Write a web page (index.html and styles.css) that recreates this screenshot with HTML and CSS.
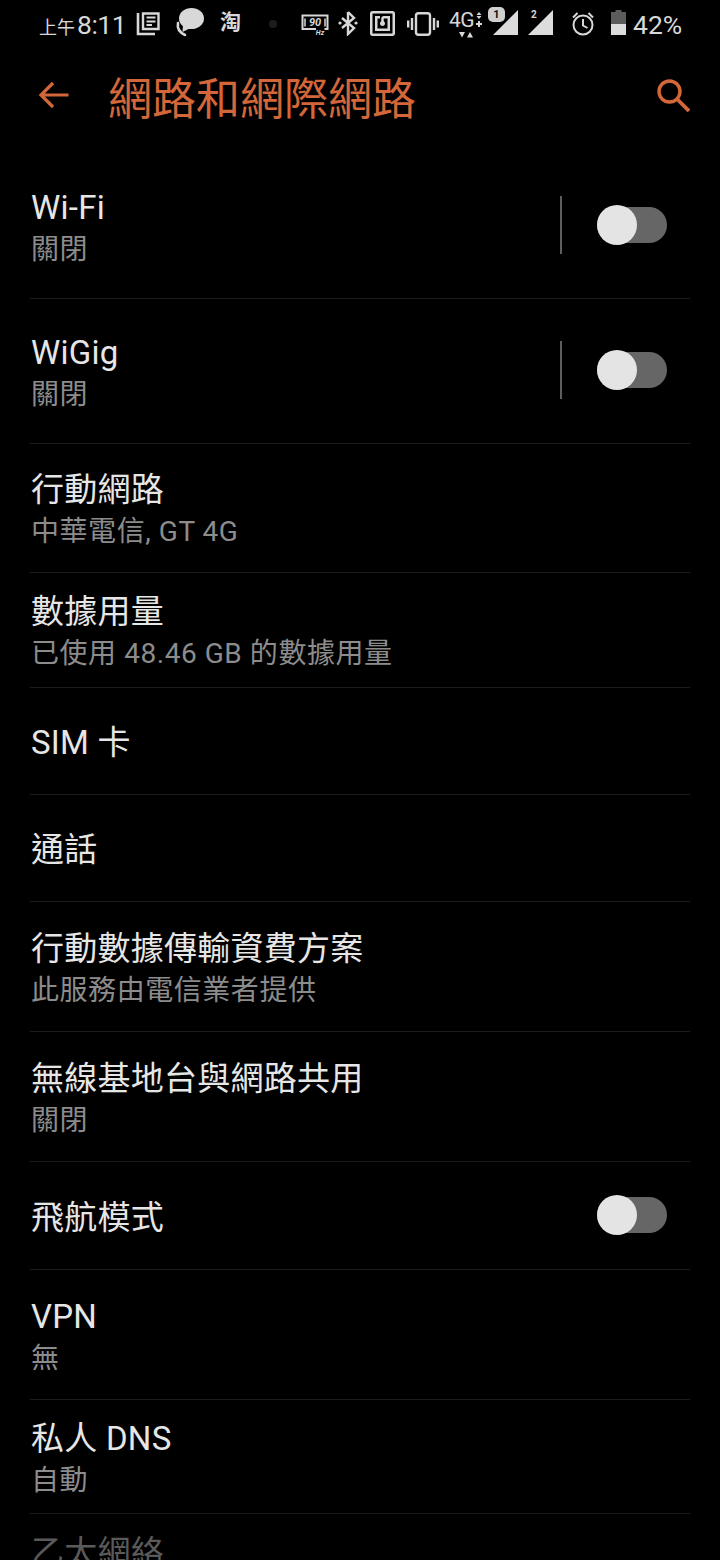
FILE: index.html
```html
<!DOCTYPE html>
<html lang="zh-Hant">
<head>
<meta charset="utf-8">
<title>網路和網際網路</title>
<link rel="stylesheet" href="styles.css">
</head>
<body>
<div class="phone">
  <header class="status">
    <span class="ampm">上午</span><span class="clock">8:11</span>
    <svg class="si news" viewBox="0 0 24 24" width="24" height="24"><path d="M2 1v21h17" fill="none" stroke="#d8d8d8" stroke-width="2.600"/><path d="M7 1.500h15.500v15.500H7z" fill="none" stroke="#d8d8d8" stroke-width="2.400"/><path d="M10.500 5.500h9M10.500 9.500h9M10.500 13h5.500" stroke="#d8d8d8" stroke-width="2"/></svg>
    <svg class="si bubble" viewBox="0 0 30 30" width="30" height="30"><ellipse cx="16.500" cy="10.500" rx="12.500" ry="10.500" fill="#d8d8d8"/><path d="M8 17l-.5 7 8-4z" fill="#d8d8d8"/><path d="M3 15Q1.500 23 10 27" fill="none" stroke="#d8d8d8" stroke-width="2.600" stroke-linecap="round"/></svg>
    <span class="taobao">淘</span>
    <span class="dot"></span>
    <svg class="si hz" viewBox="0 0 28 22" width="28" height="22"><path d="M15 15H1.500V1.500h25V15h-3" fill="none" stroke="#d8d8d8" stroke-width="2"/><path d="M4 4.500v8M24 4.500v8" stroke="#d8d8d8" stroke-width="1.500"/><text x="14" y="12" class="hz-num">90</text><text x="19" y="21" class="hz-unit">Hz</text></svg>
    <svg class="si bt" viewBox="0 0 20 26" width="20" height="26"><path d="M10 2v22l6-6L4 8M10 2l6 6L4 18" fill="none" stroke="#d8d8d8" stroke-width="2.400"/><circle cx="2" cy="13" r="1.600" fill="#d8d8d8"/><circle cx="18" cy="13" r="1.600" fill="#d8d8d8"/></svg>
    <svg class="si nfc" viewBox="2 2 20 20" width="25" height="25"><path fill="#d8d8d8" d="M20 2H4c-1.100 0-2 .9-2 2v16c0 1.100.9 2 2 2h16c1.100 0 2-.9 2-2V4c0-1.100-.9-2-2-2zm0 18H4V4h16v16zM18 6h-5c-1.100 0-2 .9-2 2v2.280c-.6.35-1 .98-1 1.720 0 1.100.9 2 2 2s2-.9 2-2c0-.74-.4-1.380-1-1.720V8h3v8H8V8h2V6H6v12h12V6z"/></svg>
    <svg class="si vib" viewBox="0 0 32 24" width="32" height="24"><rect x="9" y="1.200" width="14" height="21.600" rx="2.500" fill="none" stroke="#d8d8d8" stroke-width="2.400"/><path d="M5 6v12M1.200 8.500v7M27 6v12M30.800 8.500v7" stroke="#d8d8d8" stroke-width="2.400"/></svg>
    <span class="net">
      <span class="net-main">4G<svg viewBox="0 0 8 16" width="8" height="16"><path d="M4 0l2.500 3h-5zM4 7L1.500 4h5zM3 9h2v2h2v2H5v2H3v-2H1v-2h2z" fill="#d8d8d8"/></svg></span>
      <svg class="net-arrows" viewBox="0 0 16 6" width="16" height="6"><path d="M1 0h6L4 5.500zM9 5.500h6L12 0z" fill="#d8d8d8"/></svg>
    </span>
    <span class="sim sim1">
      <svg viewBox="0 0 27 27" width="27" height="27"><path d="M26 1v25H1z" fill="#dcdcdc"/></svg>
      <b class="sim-badge">1</b>
    </span>
    <span class="sim sim2">
      <svg viewBox="0 0 27 27" width="27" height="27"><path d="M26 1v25H1z" fill="#dcdcdc"/></svg>
      <b class="sim-num">2</b>
    </span>
    <svg class="si alarm" viewBox="0 0 24 25" width="24" height="25"><circle cx="12" cy="14" r="9.500" fill="none" stroke="#d8d8d8" stroke-width="2"/><path d="M12 8v6.500l4.500 2.500M2 6.500L6.500 2M22 6.500L17.500 2" fill="none" stroke="#d8d8d8" stroke-width="2"/></svg>
    <svg class="si batt" viewBox="0 0 15 25" width="15" height="25"><path d="M4.500 0h6v2H15v12H0V2h4.500z" fill="#5c5c5c"/><path d="M0 14h15v11H0z" fill="#dcdcdc"/></svg>
    <span class="level">42%</span>
  </header>

  <div class="toolbar">
    <svg class="tb-back" viewBox="0 0 32 28" width="32" height="28"><path d="M30.500 14H3M15 2L3 14l12 12" fill="none" stroke="#d4673a" stroke-width="3.200"/></svg>
    <h1 class="title">網路和網際網路</h1>
    <svg class="tb-search" viewBox="0 0 34 34" width="34" height="34"><circle cx="13.500" cy="13.500" r="10.500" fill="none" stroke="#d4673a" stroke-width="3.400"/><path d="M21 21l12 12" stroke="#d4673a" stroke-width="3.800"/></svg>
  </div>

  <main class="list">
    <div class="row h-tall">
      <div class="text"><div class="name">Wi-Fi</div><div class="sub">關閉</div></div>
      <span class="sep"></span><span class="switch"></span>
    </div>
    <div class="row h-tall">
      <div class="text"><div class="name">WiGig</div><div class="sub">關閉</div></div>
      <span class="sep"></span><span class="switch"></span>
    </div>
    <div class="row h-129">
      <div class="text"><div class="name">行動網路</div><div class="sub">中華電信, GT 4G</div></div>
    </div>
    <div class="row h-115">
      <div class="text"><div class="name">數據用量</div><div class="sub">已使用 48.46 GB 的數據用量</div></div>
    </div>
    <div class="row h-107">
      <div class="text"><div class="name">SIM 卡</div></div>
    </div>
    <div class="row h-107">
      <div class="text"><div class="name">通話</div></div>
    </div>
    <div class="row h-130">
      <div class="text"><div class="name">行動數據傳輸資費方案</div><div class="sub">此服務由電信業者提供</div></div>
    </div>
    <div class="row h-130">
      <div class="text"><div class="name">無線基地台與網路共用</div><div class="sub">關閉</div></div>
    </div>
    <div class="row h-108">
      <div class="text"><div class="name">飛航模式</div></div>
      <span class="switch"></span>
    </div>
    <div class="row h-130">
      <div class="text"><div class="name">VPN</div><div class="sub">無</div></div>
    </div>
    <div class="row h-114">
      <div class="text"><div class="name">私人 DNS</div><div class="sub">自動</div></div>
    </div>
    <div class="row last">
      <div class="text"><div class="name dim">乙太網絡</div></div>
    </div>
  </main>
</div>
</body>
</html>
```
FILE: styles.css
```css
* { box-sizing: border-box; }
html, body { margin: 0; padding: 0; background: #000; }
body {
  width: 720px;
  height: 1560px;
  overflow: hidden;
  font-family: Roboto, "Noto Sans CJK TC", sans-serif;
}
.phone { width: 720px; height: 1560px; background: #000; overflow: hidden; }

/* status bar */
.status {
  display: flex;
  align-items: center;
  height: 48px;
  padding-left: 39px;
  color: #d8d8d8;
}
.si { flex: none; display: block; }
.ampm { font-size: 18px; width: 38px; margin-top: 4px; white-space: nowrap; }
.clock { font-size: 26.500px; width: 50px; letter-spacing: -0.500px; white-space: nowrap; }
.news { margin-left: 9px; }
.bubble { margin-left: 15px; margin-bottom: 2px; }
.taobao { font-size: 21px; font-weight: 700; width: 22px; margin: 0 0 3px 15px; line-height: 1; }
.dot { width: 8px; height: 8px; border-radius: 50%; background: #1d1d1d; margin-left: 27px; }
.hz { margin-left: 24px; margin-top: 1px; }
.hz-num { font: italic 700 11px Roboto, sans-serif; fill: #d8d8d8; text-anchor: middle; }
.hz-unit { font: italic 700 7px Roboto, sans-serif; fill: #d8d8d8; text-anchor: middle; }
.bt { margin-left: 9px; margin-bottom: 2px; }
.nfc { margin-left: 12px; margin-bottom: 1px; }
.vib { margin-left: 12px; margin-bottom: 1px; }
.net {
  flex: none;
  display: flex;
  flex-direction: column;
  align-items: flex-start;
  width: 34px;
  margin-left: 10px;
  margin-bottom: 1px;
}
.net-main {
  display: flex;
  align-items: center;
  gap: 1px;
  font-size: 21px;
  line-height: 20px;
  letter-spacing: -0.500px;
  white-space: nowrap;
}
.net-arrows { display: block; margin: 2px 0 0 9px; }
.sim { position: relative; flex: none; display: block; width: 30px; height: 30px; margin-bottom: 6px; }
.sim svg { position: absolute; left: 3px; bottom: 0; display: block; }
.sim1 { margin-left: 6px; }
.sim2 { margin-left: 8px; width: 27px; }
.sim2 svg { left: 0; }
.sim-badge {
  position: absolute;
  left: -1px;
  top: 1px;
  width: 17px;
  height: 15px;
  border-radius: 5px;
  background: #cfcfcf;
  color: #111;
  font-size: 11px;
  line-height: 15px;
  text-align: center;
}
.sim-num {
  position: absolute;
  left: 4px;
  top: 4px;
  font-size: 10px;
  line-height: 10px;
  color: #d8d8d8;
}
.alarm { margin-left: 17px; margin-bottom: 2px; }
.batt { margin-left: 16px; margin-bottom: 4px; }
.level { font-size: 26.500px; margin-left: 7px; white-space: nowrap; }

/* toolbar */
.toolbar {
  display: flex;
  align-items: center;
  height: 106px;
  padding: 0 30px 12px 38px;
}
.tb-back { flex: none; }
.title {
  flex: 1;
  margin: 10px 0 0 38px;
  font-size: 44px;
  font-weight: 400;
  line-height: 60px;
  color: #d4673a;
  white-space: nowrap;
}
.tb-search { flex: none; }

/* rows */
.list { padding: 0 30px; }
.row {
  display: flex;
  align-items: center;
  border-bottom: 1px solid #1c1c1c;
  padding-left: 1px;
}
.h-tall { height: 145px; }
.h-130 { height: 130px; }
.h-129 { height: 129px; }
.h-115 { height: 115px; }
.h-114 { height: 114px; }
.h-107 { height: 107px; }
.h-108 { height: 108px; }
.last { border-bottom: 0; height: 60px; align-items: flex-start; padding-top: 13px; }
.text { flex: 1; min-width: 0; padding-top: 4px; }
.name {
  font-size: 33px;
  line-height: 44px;
  color: #e6e6e6;
  letter-spacing: 0.250px;
  white-space: nowrap;
}
.name.dim { color: #5a5a5a; }
.sub {
  font-size: 28px;
  line-height: 40px;
  color: #8c8c8c;
  letter-spacing: 0.550px;
  white-space: nowrap;
}
.sep { flex: none; width: 2px; height: 58px; background: #5e5e5e; margin: 0 35px 2px 0; }
.switch {
  position: relative;
  flex: none;
  display: block;
  width: 70px;
  height: 36px;
  margin: 0 23px 2px 0;
  border-radius: 18px;
  background: #666;
}
.switch::before {
  content: "";
  position: absolute;
  left: 0;
  top: -2px;
  width: 40px;
  height: 40px;
  border-radius: 50%;
  background: #e4e4e4;
}
```
